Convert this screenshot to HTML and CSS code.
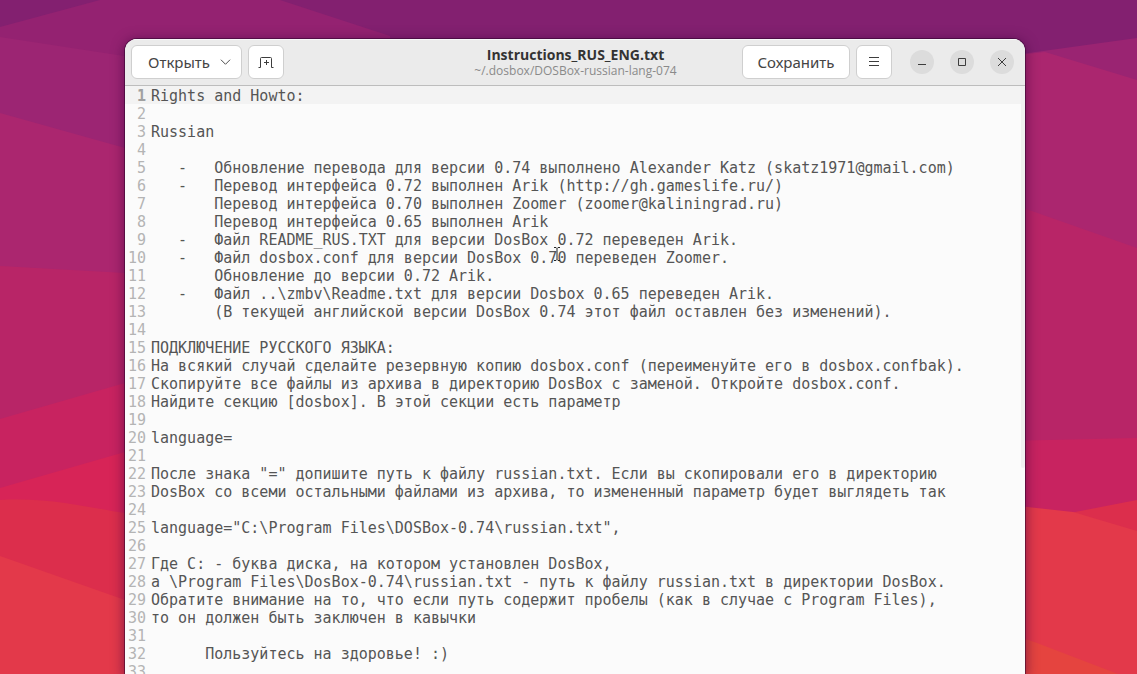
FILE: index.html
```html
<!DOCTYPE html>
<html lang="ru">
<head>
<meta charset="utf-8">
<title>Instructions_RUS_ENG.txt</title>
<link rel="stylesheet" href="styles.css">
</head>
<body>
<svg class="wallpaper" viewBox="0 0 1137 674" preserveAspectRatio="none" aria-hidden="true">
  <rect width="1137" height="674" fill="#832070"/>
  <path d="M0 27L100 0H280L390 36V200H0Z" fill="#942271"/>
  <path d="M0 37L150 60V200H0Z" fill="#9c2573"/>
  <path d="M0 113L125 148V300H0Z" fill="#ab266f"/>
  <path d="M0 266L125 273V420H0Z" fill="#b82567"/>
  <path d="M0 419L125 383V500H0Z" fill="#c82360"/>
  <path d="M0 488L125 452V520H0Z" fill="#d72457"/>
  <path d="M0 500C50 497 90 508 125 513V674H0Z" fill="#dc2e4c"/>
  <path d="M0 556L125 600V674H0Z" fill="#e3394a"/>
  <path d="M1000 57L1137 38V300H1000Z" fill="#9a2472"/>
  <path d="M1000 57L1045 52L1137 80V300H1000Z" fill="#ab266f"/>
  <path d="M1000 200L1137 248V450H1000Z" fill="#b82567"/>
  <path d="M1000 441L1137 438V530H1000Z" fill="#c82360"/>
  <path d="M1070 513L1137 500V540H1070Z" fill="#dc2e4c"/>
  <path d="M1000 504L1073 512L1137 531V674H1000Z" fill="#e3394a"/>
  <path d="M1000 630L1037 643L1118 674H1000Z" fill="#e5443f"/>
</svg>
<main class="window">
  <header class="headerbar">
    <div class="group">
      <button class="button open" type="button">Открыть
        <svg width="12" height="12" viewBox="0 0 12 12" aria-hidden="true"><path d="M1 3.5L6 8.5L11 3.5"/></svg>
      </button>
      <button class="button square" type="button" aria-label="Новая вкладка">
        <svg width="16" height="16" viewBox="0 0 16 16" aria-hidden="true"><path d="M.5 13.5H2.5V4.500Q2.500 3.500 3.500 3.500H12.500Q13.500 3.500 13.500 4.500V13.500H15.500M8.500 6V11M6 8.500H11"/></svg>
      </button>
    </div>
    <div class="titles">
      <h1 class="title">Instructions_RUS_ENG.txt</h1>
      <p class="subtitle">~/.dosbox/DOSBox-russian-lang-074</p>
    </div>
    <div class="group end">
      <button class="button save" type="button">Сохранить</button>
      <button class="button square" type="button" aria-label="Меню">
        <svg width="12" height="12" viewBox="0 0 12 12" aria-hidden="true"><path d="M1 1.500H11M1 5.500H11M1 9.500H11"/></svg>
      </button>
      <div class="controls">
        <button class="control" type="button" aria-label="Свернуть"><svg width="10" height="10" viewBox="0 0 10 10" aria-hidden="true"><path d="M1 7.500H9"/></svg></button>
        <button class="control" type="button" aria-label="Развернуть"><svg width="10" height="10" viewBox="0 0 10 10" aria-hidden="true"><path d="M1.500 1.500H8.500V8.500H1.500Z"/></svg></button>
        <button class="control" type="button" aria-label="Закрыть"><svg width="10" height="10" viewBox="0 0 10 10" aria-hidden="true"><path d="M1 1L9 9M9 1L1 9"/></svg></button>
      </div>
    </div>
  </header>
  <div class="editor">
    <pre class="numbers" aria-hidden="true"><b>1</b>
2
3
4
5
6
7
8
9
10
11
12
13
14
15
16
17
18
19
20
21
22
23
24
25
26
27
28
29
30
31
32
33</pre>
    <textarea class="text" rows="33" wrap="off" spellcheck="false" aria-label="Текст документа">Rights and Howto:

Russian

   -   Обновление перевода для версии 0.74 выполнено Alexander Katz (skatz1971@gmail.com)
   -   Перевод интерфейса 0.72 выполнен Arik (http://gh.gameslife.ru/)
       Перевод интерфейса 0.70 выполнен Zoomer (zoomer@kaliningrad.ru)
       Перевод интерфейса 0.65 выполнен Arik
   -   Файл README_RUS.TXT для версии DosBox 0.72 переведен Arik.
   -   Файл dosbox.conf для версии DosBox 0.70 переведен Zoomer.
       Обновление до версии 0.72 Arik.
   -   Файл ..\zmbv\Readme.txt для версии Dosbox 0.65 переведен Arik.
       (В текущей английской версии DosBox 0.74 этот файл оставлен без изменений).

ПОДКЛЮЧЕНИЕ РУССКОГО ЯЗЫКА:
На всякий случай сделайте резервную копию dosbox.conf (переименуйте его в dosbox.confbak).
Скопируйте все файлы из архива в директорию DosBox с заменой. Откройте dosbox.conf.
Найдите секцию [dosbox]. В этой секции есть параметр

language=

После знака "=" допишите путь к файлу russian.txt. Если вы скопировали его в директорию
DosBox со всеми остальными файлами из архива, то измененный параметр будет выглядеть так

language="C:\Program Files\DOSBox-0.74\russian.txt",

Где C: - буква диска, на котором установлен DosBox,
а \Program Files\DosBox-0.74\russian.txt - путь к файлу russian.txt в директории DosBox.
Обратите внимание на то, что если путь содержит пробелы (как в случае с Program Files),
то он должен быть заключен в кавычки

      Пользуйтесь на здоровье! :)
</textarea>
    <div class="scrollbar"></div>
    <svg class="pointer" width="8" height="16" viewBox="0 0 8 16" aria-hidden="true"><path d="M1 1.500H3L4 2.500L5 1.500H7M4 2.500V13.500M1 14.500H3L4 13.500L5 14.500H7"/></svg>
  </div>
</main>
</body>
</html>
```
FILE: styles.css
```css
* { box-sizing: border-box; }

body {
  margin: 0;
  height: 100vh;
  overflow: hidden;
  padding: 39px 112px 0 125px;
  display: flex;
  background: #832070;
  color: #444;
  font-family: "Noto Sans", sans-serif;
}

.wallpaper {
  position: absolute;
  inset: 0;
  width: 100%;
  height: 100%;
  z-index: -1;
}

.window {
  flex: 1;
  min-width: 0;
  display: flex;
  flex-direction: column;
  background: #fbfbfb;
  border-radius: 12px 12px 0 0;
  overflow: hidden;
  box-shadow: 0 0 0 1px rgba(40, 0, 40, .5), 0 2px 12px 2px rgba(60, 0, 60, .5);
}

.headerbar {
  flex: none;
  display: grid;
  grid-template-columns: 1fr auto 1fr;
  align-items: center;
  height: 47px;
  padding: 0 5px 0 6px;
  background: #ebebeb;
  border-bottom: 1px solid #bdbdbd;
  box-shadow: inset 0 1px #f8f8f8;
}

.group { display: flex; align-items: center; gap: 6px; }
.end { justify-content: flex-end; }

button svg path { fill: none; stroke: #3d3d3d; }

.button {
  display: flex;
  align-items: center;
  justify-content: center;
  gap: 10px;
  height: 34px;
  padding: 0 10px 0 16px;
  border: 1px solid #cfcfcf;
  border-radius: 6px;
  background: #fff;
  color: #444;
  font: 15px/20px "Noto Sans", sans-serif;
}
.open { width: 111px; }
.save { width: 108px; padding: 0; }
.square { width: 36px; padding: 0; }

.titles { text-align: center; }
.title { margin: 0; font: bold 14px/16px "Open Sans", sans-serif; color: #333; }
.subtitle { margin: 0; font: 12px/15px "Open Sans", sans-serif; color: #8a8a8a; }

.controls { display: flex; gap: 16px; padding: 0 6px 0 12px; }
.control {
  display: flex;
  align-items: center;
  justify-content: center;
  width: 24px;
  height: 24px;
  padding: 0;
  border: 0;
  border-radius: 50%;
  background: #dcdcdc;
}

.editor {
  position: relative;
  flex: 1;
  min-height: 0;
  display: flex;
  align-items: flex-start;
  overflow: hidden;
  padding-top: 1px;
  background: linear-gradient(#f3f3f3, #f3f3f3) 0 0 / 100% 18px no-repeat;
}
.numbers, .text {
  margin: 0;
  font: 15px/18px "DejaVu Sans Mono", monospace;
}
.numbers { width: 21px; text-align: right; color: #b4b4b4; }
.numbers b { color: #a0a0a0; }
.text {
  flex: 1;
  min-width: 0;
  padding: 0 0 0 5px;
  border: 0;
  outline: 0;
  resize: none;
  overflow: hidden;
  background: transparent;
  color: #555;
}

.scrollbar {
  position: absolute;
  top: 0;
  right: 0;
  width: 4px;
  height: 382px;
  border-radius: 2px;
  background: #f0f0f0;
}
.pointer { position: absolute; left: 428px; top: 160px; }
.pointer path { fill: none; stroke: #222; }
```
